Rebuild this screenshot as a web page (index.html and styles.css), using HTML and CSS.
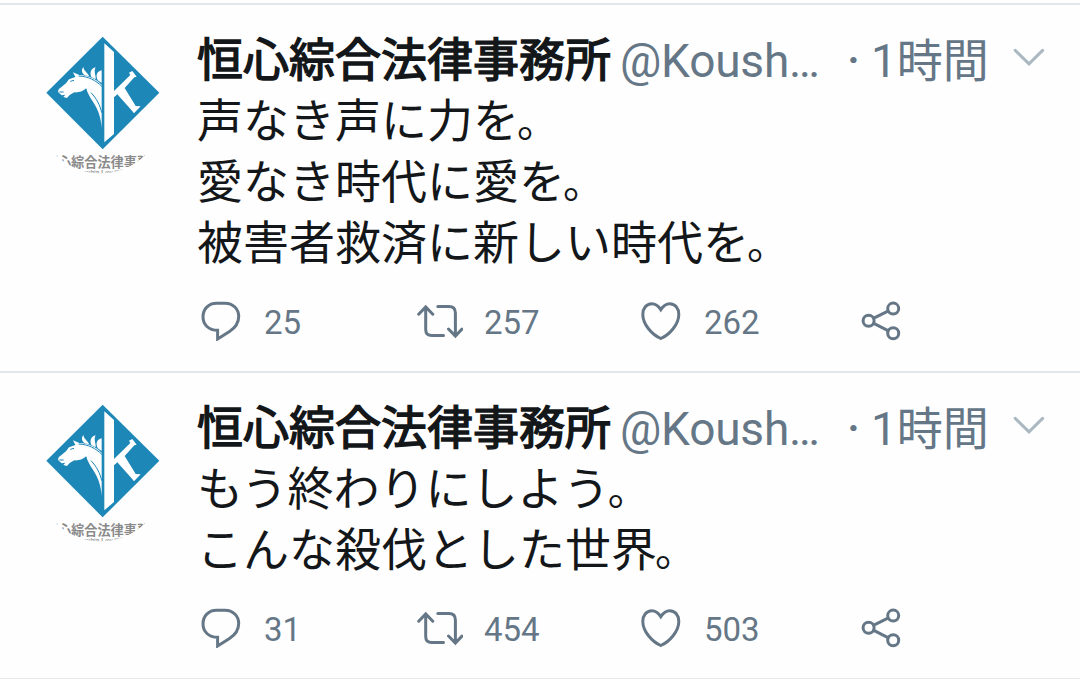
FILE: index.html
```html
<!DOCTYPE html>
<html lang="ja">
<head>
  <meta charset="UTF-8" />
  <meta name="viewport" content="width=device-width, initial-scale=1.0"/>
  <title>恒心綜合法律事務所</title>
  <link rel="stylesheet" href="styles.css">
</head>
<body>
  <!-- shared icons -->
  <svg class="symbols" width="0" height="0">
    <clipPath id="round"><circle cx="212" cy="268" r="192"/></clipPath>
    <symbol id="avatar" viewBox="0 0 450 510">
      <path fill="#1d87b8" d="M218 50L388 218L218 388L49 218Z"/>
      <path fill="#fff" d="M223 70L252 96V213L301 165L297 158L307 153L320 170L313 172L284 204L317 258L332 259L312 280L306 272L262 223L252 232V342L223 367Z"/>
      <path fill="#fff" d="M215 324C213 294 205 269 188 244C178 229 171 216 169 205C158 215 145 218 133 217L119 225L111 234L100 231L106 224L95 226L84 216L86 208L108 190L117 178L136 171L129 157L148 165C175 166 198 177 215 194Z"/>
      <path fill="#fff" d="M164 166C154 158 154 149 160 141C162 154 172 157 178 169ZM184 171C178 158 184 145 197 142C190 155 198 165 197 178ZM203 181C196 165 201 155 215 151V189Z"/>
      <path fill="none" stroke="#1d87b8" stroke-width="3" d="M146 168C174 169 198 181 216 200M183 218C200 236 210 255 215 278M121 184L132 181M88 216L101 216"/>
      <g clip-path="url(#round)" text-anchor="middle">
        <text class="avatar-name" x="222" y="440">恒心綜合法律事務所</text>
        <text class="avatar-sub" x="222" y="463">Koushin Law Office</text>
      </g>
    </symbol>
    <symbol id="reply" viewBox="0 0 40 40">
      <path d="M15.5 2.2H24C32 2.2 37.7 8 37.7 15.6C37.7 22 34.4 26.8 28.5 30.5L16.6 38V29.3C7.6 29.3 2 23.6 2 15.8C2 8 7.6 2.2 15.5 2.2Z"/>
    </symbol>
    <symbol id="retweet" viewBox="0 0 46 40">
      <path d="M1.7 13.2L8.7 6L15.8 13.2M8.7 6.5V28.5Q8.7 34.6 14.8 34.6H26.5M20.8 5.6H32Q38.4 5.6 38.4 12V34.5M31.5 28L38.4 35L45 28"/>
    </symbol>
    <symbol id="like" viewBox="0 0 40 40">
      <path d="M19.8 8.6C17.3 4.7 14.3 2.7 10.8 2.7C5.5 2.7 1.8 7.4 1.8 13.4C1.8 23.3 11 33.6 19.8 37.5C28.6 33.6 37.8 23.3 37.8 13.4C37.8 7.4 34.1 2.7 28.8 2.7C25.3 2.7 22.3 4.7 19.8 8.6Z"/>
    </symbol>
    <symbol id="share" viewBox="0 0 40 40">
      <circle cx="7.6" cy="19.8" r="5.5"/>
      <circle cx="32.2" cy="7.6" r="5.5"/>
      <circle cx="32.2" cy="32.3" r="5.5"/>
      <path d="M12.8 17.2L27 10.2M12.8 22.4L27 29.7"/>
    </symbol>
    <symbol id="arrow" viewBox="0 0 32 20">
      <path d="M2.2 2.4L16 15.8L29.6 2.4"/>
    </symbol>
  </svg>

  <div class="timeline">
    <div class="tweet">
      <svg class="avatar"><use href="#avatar"/></svg>
      <div class="content">
        <div class="header">
          <span class="name">恒心綜合法律事務所</span>
          <span class="handle">@Koush…</span>
          <span class="dot">·</span>
          <span class="time">1時間</span>
          <svg class="arrow"><use href="#arrow"/></svg>
        </div>
        <p class="text">声なき声に力を<span class="stop">。</span><br>愛なき時代に愛を<span class="stop">。</span><br>被害者救済に新しい時代を<span class="stop">。</span></p>
        <div class="actions">
          <div class="action"><svg class="icon"><use href="#reply"/></svg><span>25</span></div>
          <div class="action"><svg class="icon wide"><use href="#retweet"/></svg><span>257</span></div>
          <div class="action"><svg class="icon"><use href="#like"/></svg><span>262</span></div>
          <div class="action"><svg class="icon"><use href="#share"/></svg></div>
        </div>
      </div>
    </div>

    <div class="tweet">
      <svg class="avatar"><use href="#avatar"/></svg>
      <div class="content">
        <div class="header">
          <span class="name">恒心綜合法律事務所</span>
          <span class="handle">@Koush…</span>
          <span class="dot">·</span>
          <span class="time">1時間</span>
          <svg class="arrow"><use href="#arrow"/></svg>
        </div>
        <p class="text">もう終わりにしよう<span class="stop">。</span><br>こんな殺伐とした世界<span class="stop">。</span></p>
        <div class="actions">
          <div class="action"><svg class="icon"><use href="#reply"/></svg><span>31</span></div>
          <div class="action"><svg class="icon wide"><use href="#retweet"/></svg><span>454</span></div>
          <div class="action"><svg class="icon"><use href="#like"/></svg><span>503</span></div>
          <div class="action"><svg class="icon"><use href="#share"/></svg></div>
        </div>
      </div>
    </div>
  </div>
</body>
</html>
```
FILE: styles.css
```css
body {
  margin: 0;
  background-color: #fefefe;
  font-family: Roboto, 'Noto Sans CJK JP', sans-serif;
  color: #14171a;
  overflow: hidden;
}

.symbols {
  position: absolute;
}

.timeline {
  margin-top: 3px;
  border-top: 2px solid #e3e7ea;
}

.tweet {
  display: flex;
  box-sizing: border-box;
  padding: 15px 0 30px 30px;
  border-bottom: 2px solid #e1e8ed;
}

.tweet:last-child {
  border-bottom-color: #e6e8ea;
}

.avatar {
  width: 150px;
  height: 170px;
  flex-shrink: 0;
}

.avatar-name {
  font-family: 'Noto Sans CJK JP', sans-serif;
  font-size: 39.5px;
  font-weight: bold;
  fill: #8a8a8a;
}

.avatar-sub {
  font-family: 'Liberation Serif', serif;
  font-size: 20px;
  fill: #777;
}

.content {
  flex: 1;
  padding: 10px 0 0 17px;
}

.header {
  display: flex;
  height: 61px;
  font-size: 46px;
  line-height: 61px;
  color: #657786;
  white-space: nowrap;
}

.name {
  width: 414px;
  color: #14171a;
  -webkit-text-stroke: 1.5px #14171a;
}

.handle {
  width: 227px;
  margin-left: 9px;
  padding-top: 1px;
  letter-spacing: -0.2px;
}

.dot {
  width: 24px;
  font-weight: 500;
}

.time {
  width: 140px;
  padding-top: 1px;
}

.arrow {
  width: 32px;
  height: 20px;
  margin-top: 18px;
  margin-left: 2px;
  fill: none;
  stroke: #aab8c2;
  stroke-width: 3;
  stroke-linecap: round;
}

.text {
  margin: 0;
  font-size: 46px;
  line-height: 61px;
}

.stop {
  margin-left: -2px;
  font-size: 41px;
  line-height: 1;
}

.actions {
  display: flex;
  margin-top: 27px;
  margin-left: 4px;
  color: #657786;
}

.action {
  display: flex;
  align-items: center;
  width: 220px;
  height: 40px;
  font-size: 33px;
  line-height: 40px;
}

.action span {
  margin-left: 23px;
  padding-top: 3px;
}

.icon {
  width: 40px;
  height: 40px;
  fill: none;
  stroke: #657786;
  stroke-width: 3;
  stroke-linecap: round;
}

.wide {
  width: 46px;
  margin-left: -4px;
}

.action .wide + span {
  margin-left: 21px;
}
```
